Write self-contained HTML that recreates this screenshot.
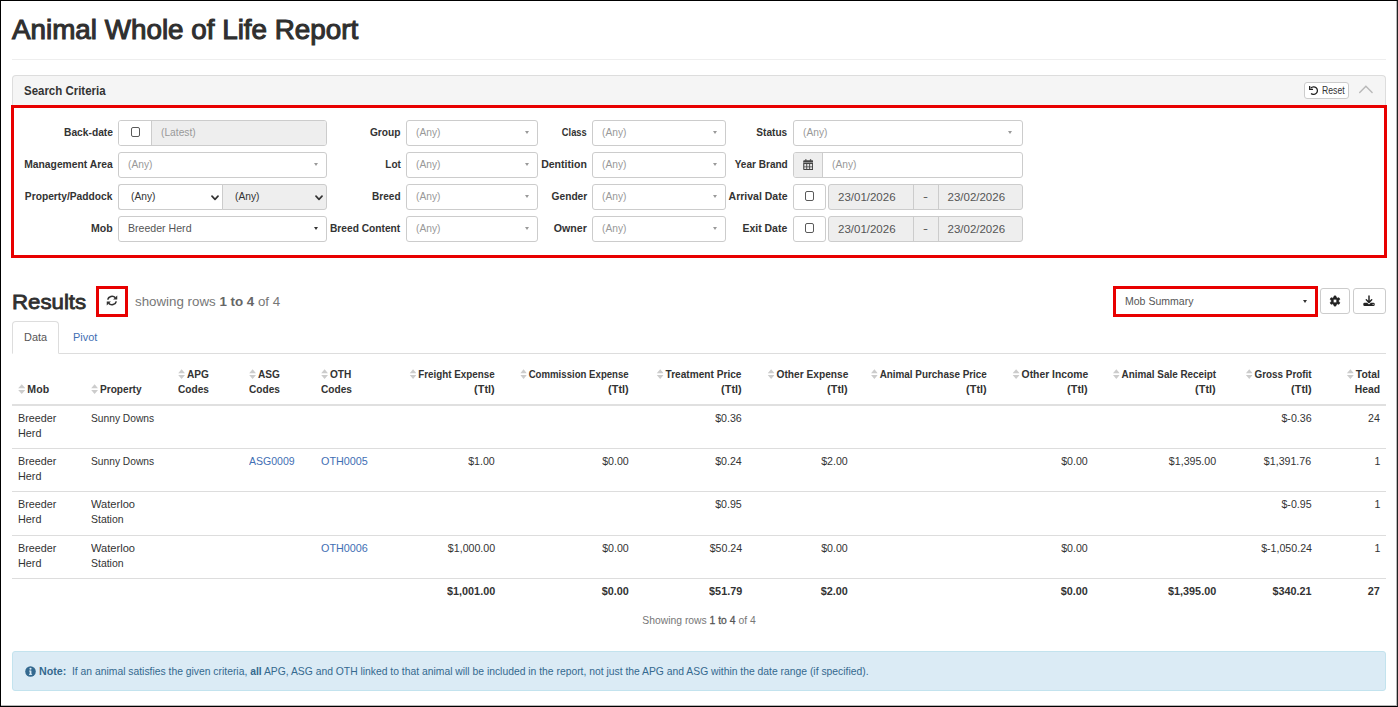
<!DOCTYPE html>
<html lang="en"><head><meta charset="utf-8"><title>Animal Whole of Life Report</title>
<style>
*{box-sizing:border-box}
html,body{margin:0;padding:0}
body{width:1398px;height:707px;position:relative;overflow:hidden;background:#fff;
 font-family:"Liberation Sans",sans-serif;font-size:11.5px;color:#333;line-height:1}
.frame{position:absolute;left:0;top:0;width:1398px;height:707px;border:1px solid #000;border-right-color:#222;box-shadow:inset -1px -1px 0 0 rgba(0,0,0,.28);z-index:50;pointer-events:none}
.abs{position:absolute}
.t{display:inline-block;white-space:nowrap;transform:scaleX(var(--sx,.89));transform-origin:0 50%}
.t.r{transform-origin:100% 50%}
.t.c{transform-origin:50% 50%}
.b{font-weight:bold}
h1{position:absolute;left:12px;top:17px;margin:0;font-size:27px;line-height:27px;font-weight:normal;-webkit-text-stroke:1.05px #2f2f2f;color:#2f2f2f;white-space:nowrap}
.hr{position:absolute;left:12px;top:59px;width:1374px;height:1px;background:#eee}
.panel-h{position:absolute;left:12px;top:75px;width:1374px;height:31px;background:#f5f5f5;border:1px solid #ddd;border-bottom:0;border-radius:4px 4px 0 0}
.panel-h .ttl{position:absolute;left:10.5px;top:8px;font-size:12px;line-height:14px;font-weight:bold;color:#333}
.redbox{position:absolute;border:3px solid #e80000;z-index:5}
.lbl{position:absolute;height:26px;line-height:24px;font-weight:bold;text-align:right;white-space:nowrap;color:#333}
.ctl{position:absolute;height:26px;border:1px solid #ccc;border-radius:3px;background:#fff;line-height:23px;white-space:nowrap;overflow:hidden}
.ctl .ph{position:absolute;left:8.7px;top:0;color:#999}
.ctl .val{position:absolute;left:8.7px;top:0;color:#555}
.caret{position:absolute;width:0;height:0;border-left:2.5px solid transparent;border-right:2.5px solid transparent;border-top:3px solid #888}
.dis{background:#eee}
.addon{position:absolute;top:0;height:24px;border-right:1px solid #ccc}
.cb{position:absolute;width:9.6px;height:9.8px;border:1.4px solid #5a5a5a;border-radius:2px;background:#fff}

table.g{position:absolute;left:12px;top:361px;width:1374px;border-collapse:collapse;table-layout:fixed;font-size:11.5px;line-height:15px}
table.g th,table.g td{padding:0 6px;vertical-align:top;text-align:left;font-weight:normal;overflow:visible}
table.g thead th{font-weight:bold;vertical-align:bottom;height:43.500px;padding-bottom:7px;border-bottom:2px solid #e0e0e0;color:#333}
table.g tbody td{padding-top:5.2px;border-bottom:1px solid #ddd;color:#333}
table.g tfoot td{height:28px;padding-top:4.7px;font-weight:bold;color:#333}
table.g .n{text-align:right}
table.g a{color:#3f6fb4;text-decoration:none}
.hc{display:flex;flex-direction:column;align-items:flex-start}
.hc.he{align-items:flex-end}
.si{display:inline-block;width:8.2px;height:10px;vertical-align:-1px;margin-right:2.000px}
</style></head>
<body>
<div class="frame"></div>
<h1><span class="t" style="--sx:1.030;">Animal Whole of Life Report</span></h1>
<div class="hr"></div>
<div class="panel-h"><span class="ttl"><span class="t" style="--sx:0.955;">Search Criteria</span></span></div>
<div class="redbox" style="left:11px;top:105px;width:1376px;height:153px"></div>
<div class="lbl" style="left:-27.5px;width:140px;top:120px"><span class="t r" style="--sx:0.891;">Back-date</span></div>
<div class="lbl" style="left:-27.5px;width:140px;top:152px"><span class="t r" style="--sx:0.896;">Management Area</span></div>
<div class="lbl" style="left:-27.5px;width:140px;top:184px"><span class="t r" style="--sx:0.890;">Property/Paddock</span></div>
<div class="lbl" style="left:-27.5px;width:140px;top:216px"><span class="t r" style="--sx:0.918;">Mob</span></div>
<div class="lbl" style="left:260.5px;width:140px;top:120px"><span class="t r" style="--sx:0.887;">Group</span></div>
<div class="lbl" style="left:260.5px;width:140px;top:152px"><span class="t r" style="--sx:0.872;">Lot</span></div>
<div class="lbl" style="left:260.5px;width:140px;top:184px"><span class="t r" style="--sx:0.874;">Breed</span></div>
<div class="lbl" style="left:260.5px;width:140px;top:216px"><span class="t r" style="--sx:0.887;">Breed Content</span></div>
<div class="lbl" style="left:447.0px;width:140px;top:120px"><span class="t r" style="--sx:0.811;">Class</span></div>
<div class="lbl" style="left:447.0px;width:140px;top:152px"><span class="t r" style="--sx:0.917;">Dentition</span></div>
<div class="lbl" style="left:447.0px;width:140px;top:184px"><span class="t r" style="--sx:0.887;">Gender</span></div>
<div class="lbl" style="left:447.0px;width:140px;top:216px"><span class="t r" style="--sx:0.922;">Owner</span></div>
<div class="lbl" style="left:647.5px;width:140px;top:120px"><span class="t r" style="--sx:0.876;">Status</span></div>
<div class="lbl" style="left:647.5px;width:140px;top:152px"><span class="t r" style="--sx:0.873;">Year Brand</span></div>
<div class="lbl" style="left:647.5px;width:140px;top:184px"><span class="t r" style="--sx:0.914;">Arrival Date</span></div>
<div class="lbl" style="left:647.5px;width:140px;top:216px"><span class="t r" style="--sx:0.910;">Exit Date</span></div>
<div class="ctl" style="left:118px;top:120px;width:209px"><span class="addon" style="left:0;width:33px;background:#fff"></span><span class="cb" style="left:11.5px;top:6.1px"></span><span class="abs dis" style="left:33px;top:0;width:175px;height:24px"></span><span class="ph" style="left:41.700px"><span class="t" style="--sx:0.890;">(Latest)</span></span></div>
<div class="ctl" style="left:118px;top:152px;width:209px"><span class="ph"><span class="t" style="--sx:0.890;">(Any)</span></span><span class="caret" style="right:8.5px;top:10.2px;border-top-color:#999"></span></div>
<div class="ctl" style="left:118px;top:216px;width:209px"><span class="val"><span class="t" style="--sx:0.920;">Breeder Herd</span></span><span class="caret" style="right:8.5px;top:10.2px;border-top-color:#333"></span></div>
<div class="ctl" style="left:406px;top:120px;width:132px"><span class="ph"><span class="t" style="--sx:0.890;">(Any)</span></span><span class="caret" style="right:8.5px;top:10.2px;border-top-color:#999"></span></div>
<div class="ctl" style="left:406px;top:152px;width:132px"><span class="ph"><span class="t" style="--sx:0.890;">(Any)</span></span><span class="caret" style="right:8.5px;top:10.2px;border-top-color:#999"></span></div>
<div class="ctl" style="left:406px;top:184px;width:132px"><span class="ph"><span class="t" style="--sx:0.890;">(Any)</span></span><span class="caret" style="right:8.5px;top:10.2px;border-top-color:#999"></span></div>
<div class="ctl" style="left:406px;top:216px;width:132px"><span class="ph"><span class="t" style="--sx:0.890;">(Any)</span></span><span class="caret" style="right:8.5px;top:10.2px;border-top-color:#999"></span></div>
<div class="ctl" style="left:592px;top:120px;width:134px"><span class="ph"><span class="t" style="--sx:0.890;">(Any)</span></span><span class="caret" style="right:8.5px;top:10.2px;border-top-color:#999"></span></div>
<div class="ctl" style="left:592px;top:152px;width:134px"><span class="ph"><span class="t" style="--sx:0.890;">(Any)</span></span><span class="caret" style="right:8.5px;top:10.2px;border-top-color:#999"></span></div>
<div class="ctl" style="left:592px;top:184px;width:134px"><span class="ph"><span class="t" style="--sx:0.890;">(Any)</span></span><span class="caret" style="right:8.5px;top:10.2px;border-top-color:#999"></span></div>
<div class="ctl" style="left:592px;top:216px;width:134px"><span class="ph"><span class="t" style="--sx:0.890;">(Any)</span></span><span class="caret" style="right:8.5px;top:10.2px;border-top-color:#999"></span></div>
<div class="ctl" style="left:793px;top:120px;width:230px"><span class="ph"><span class="t" style="--sx:0.890;">(Any)</span></span><span class="caret" style="right:10px;top:10.2px;border-top-color:#999"></span></div>
<div class="ctl" style="left:118px;top:184px;width:105px;border-radius:3px 0 0 3px;border-right:0"><span class="val" style="left:12px;color:#333"><span class="t" style="--sx:0.890;">(Any)</span></span><svg class="abs" style="right:4.5px;top:9.5px" width="8" height="6" viewBox="0 0 8 6"><path d="M1 1.2 L4 4.3 L7 1.2" fill="none" stroke="#333" stroke-width="1.7" stroke-linecap="round" stroke-linejoin="round"/></svg></div>
<div class="ctl dis" style="left:222px;top:184px;width:105px;border-radius:0 3px 3px 0"><span class="val" style="left:12px;color:#333"><span class="t" style="--sx:0.890;">(Any)</span></span><svg class="abs" style="right:3.5px;top:9.5px" width="8" height="6" viewBox="0 0 8 6"><path d="M1 1.2 L4 4.3 L7 1.2" fill="none" stroke="#333" stroke-width="1.7" stroke-linecap="round" stroke-linejoin="round"/></svg></div>
<div class="ctl" style="left:793px;top:152px;width:230px"><span class="addon dis" style="left:0;width:28.5px"></span><svg class="abs" style="left:9.000px;top:5.800px" width="10.4" height="11.2" viewBox="0 0 10.4 11.2"><path d="M2.2 0.2h1.300v1.600H2.200zM6.900 0.200h1.300v1.600H6.900z" fill="#444"/><path d="M0.200 2.200a1 1 0 0 1 1-1h8.000a1 1 0 0 1 1 1v7.900a1 1 0 0 1-1 1H1.200a1 1 0 0 1-1-1z" fill="#444"/><path d="M0.200 3.300h10v0.600h-10z" fill="#aaa"/><path d="M1.300 5.100h2.000v2.300H1.300zM4.200 5.100h2.000v2.300H4.200zM7.100 5.100h2.000v2.300H7.100zM1.300 8.200h2.000v1.900H1.300zM4.200 8.200h2.000v1.900H4.200zM7.100 8.200h2.000v1.900H7.100z" fill="#e4e4e4"/></svg><span class="ph" style="left:38px"><span class="t" style="--sx:0.890;">(Any)</span></span></div>
<div class="ctl" style="left:793px;top:184px;width:33px"><span class="cb" style="left:10.800px;top:6.400px"></span></div><div class="ctl dis" style="left:828px;top:184px;width:195px"><span class="val" style="left:9px;top:0.5px"><span class="t" style="--sx:1.000;">23/01/2026</span></span><span class="abs" style="left:84.200px;top:0;width:25.500px;height:24px;border-left:1px solid #ccc;border-right:1px solid #ccc"></span><span class="val" style="left:94px;top:-0.5px"><span class="t" style="--sx:1.300;">-</span></span><span class="val" style="left:118.500px;top:0.5px"><span class="t" style="--sx:1.000;">23/02/2026</span></span></div>
<div class="ctl" style="left:793px;top:216px;width:33px"><span class="cb" style="left:10.800px;top:6.400px"></span></div><div class="ctl dis" style="left:828px;top:216px;width:195px"><span class="val" style="left:9px;top:0.5px"><span class="t" style="--sx:1.000;">23/01/2026</span></span><span class="abs" style="left:84.200px;top:0;width:25.500px;height:24px;border-left:1px solid #ccc;border-right:1px solid #ccc"></span><span class="val" style="left:94px;top:-0.5px"><span class="t" style="--sx:1.300;">-</span></span><span class="val" style="left:118.500px;top:0.5px"><span class="t" style="--sx:1.000;">23/02/2026</span></span></div>
<div class="abs" style="left:1304px;top:82px;width:44.5px;height:16.5px;border:1px solid #ccc;border-radius:3px;background:#fff;z-index:6"><svg class="abs" style="left:4.1px;top:2.6px" width="9.2" height="9.2" viewBox="0 0 512 512"><path d="M0 0H72V152H224V224H0Z" fill="#222"/><path d="M98.5 114.1A212 212 0 1 1 114.1 413.5" fill="none" stroke="#222" stroke-width="70"/></svg><span class="abs" style="left:16.800px;top:2.600px;font-size:10px;line-height:10px;color:#333"><span class="t" style="--sx:0.865;">Reset</span></span></div>
<svg class="abs" style="left:1357.500px;top:84px;z-index:6" width="16" height="11" viewBox="0 0 16 11"><path d="M1.700 8.600 L7.900 2.300 L14.100 8.600" fill="none" stroke="#b8b8b8" stroke-width="1.4" stroke-linecap="round" stroke-linejoin="miter"/></svg>
<div class="abs" style="left:11.800px;top:292px;font-size:20.5px;line-height:20.5px;color:#2f2f2f;-webkit-text-stroke:0.8px #2f2f2f"><span class="t" style="--sx:1.085;">Results</span></div>
<div class="redbox" style="left:96px;top:286px;width:32px;height:31px"></div>
<svg class="abs" style="left:105.800px;top:295px" width="12" height="11" preserveAspectRatio="none" viewBox="0 0 11 11"><path d="M1.6 4.600 A4.000 4.000 0 0 1 8.600 2.700" fill="none" stroke="#333" stroke-width="1.500"/><path d="M9.400 6.400 A4.000 4.000 0 0 1 2.400 8.300" fill="none" stroke="#333" stroke-width="1.5"/><path d="M10.300 0.600 L10.300 4.400 L6.500 4.400 Z" fill="#333"/><path d="M0.700 10.400 L0.700 6.600 L4.500 6.600 Z" fill="#333"/></svg>
<div class="abs" style="left:135.000px;top:295.000px;font-size:13px;line-height:13px;color:#777"><span class="t" style="--sx:1.025;">showing rows <b style="color:#666">1 to 4</b> of 4</span></div>
<div class="redbox" style="left:1113px;top:286px;width:205px;height:31px"></div>
<div class="abs" style="left:1116px;top:289px;width:199px;height:25px;background:#fff"><span class="abs" style="left:9.000px;top:6.500px;color:#555"><span class="t" style="--sx:0.915;">Mob Summary</span></span><span class="caret" style="right:8px;top:10.5px;border-top-color:#333"></span></div>
<div class="abs" style="left:1320px;top:288px;width:30px;height:26px;border:1px solid #ccc;border-radius:3px;background:#fff"><svg class="abs" style="left:7.800px;top:5.600px" width="12" height="12" viewBox="0 0 12 12"><path fill="#222" fill-rule="evenodd" stroke="#222" stroke-width="0.7" stroke-linejoin="round" d="M4.89 2.31 L5.09 0.93 L6.91 0.93 L7.11 2.31 L8.64 3.19 L9.93 2.68 L10.85 4.26 L9.75 5.12 L9.75 6.88 L10.85 7.74 L9.93 9.32 L8.64 8.81 L7.11 9.69 L6.91 11.07 L5.09 11.07 L4.89 9.69 L3.36 8.81 L2.07 9.32 L1.15 7.74 L2.25 6.88 L2.25 5.12 L1.15 4.26 L2.07 2.68 L3.36 3.19Z M4.10 6.00 a1.9 1.9 0 1 0 3.8 0 a1.9 1.9 0 1 0 -3.8 0Z"/></svg></div>
<div class="abs" style="left:1353px;top:288px;width:33px;height:26px;border:1px solid #ccc;border-radius:3px;background:#fff"><svg class="abs" style="left:9.300px;top:5.700px" width="12" height="12" viewBox="0 0 12 12"><path d="M1.6 7.8h8.800a1.300 1.300 0 0 1 1.300 1.300v0.600a1.300 1.300 0 0 1-1.300 1.300H1.600a1.300 1.300 0 0 1-1.300-1.300v-0.600a1.300 1.300 0 0 1 1.300-1.300z" fill="#222"/><path d="M3.900 7.600 L6 9.600 L8.100 7.600Z" fill="#fff"/><circle cx="10.100" cy="9.400" r="0.550" fill="#ddd"/><path d="M6 0.900V7.400M3.300 4.800L6 7.500L8.700 4.800" fill="none" stroke="#222" stroke-width="1.450" stroke-linecap="round" stroke-linejoin="round"/></svg></div>
<div class="abs" style="left:12px;top:352.500px;width:1374px;height:1px;background:#ddd"></div>
<div class="abs" style="left:12px;top:321px;width:47px;height:33px;border:1px solid #ddd;border-bottom:1px solid #fff;border-radius:4px 4px 0 0;background:#fff"><span class="abs" style="left:10.5px;top:9.500px;color:#555"><span class="t" style="--sx:0.950;">Data</span></span></div>
<div class="abs" style="left:73.000px;top:331.500px;color:#3f6fb4"><span class="t" style="--sx:0.950;">Pivot</span></div>
<table class="g"><colgroup><col style="width:73px"><col style="width:87.3px"><col style="width:70.6px"><col style="width:72.1px"><col style="width:88.5px"><col style="width:97.2px"><col style="width:134.2px"><col style="width:112.7px"><col style="width:106.3px"><col style="width:138.5px"><col style="width:101.2px"><col style="width:127.9px"><col style="width:95.7px"><col style="width:68.3px"></colgroup><thead><tr><th class=""><div class="hc "><span class="t" style="--sx:0.920;"><svg class="si" viewBox="0 0 8.2 10"><path d="M0.200 4.300 L4.1 0.300 L8.000 4.300Z M0.200 5.900 L4.1 9.900 L8.000 5.900Z" fill="#ccc"/></svg>Mob</span></div></th><th class=""><div class="hc "><span class="t" style="--sx:0.880;"><svg class="si" viewBox="0 0 8.2 10"><path d="M0.200 4.300 L4.1 0.300 L8.000 4.300Z M0.200 5.900 L4.1 9.900 L8.000 5.900Z" fill="#ccc"/></svg>Property</span></div></th><th class=""><div class="hc "><span class="t" style="--sx:0.880;"><svg class="si" viewBox="0 0 8.2 10"><path d="M0.200 4.300 L4.1 0.300 L8.000 4.300Z M0.200 5.900 L4.1 9.900 L8.000 5.900Z" fill="#ccc"/></svg>APG</span><span class="t" style="--sx:0.880;">Codes</span></div></th><th class=""><div class="hc "><span class="t" style="--sx:0.880;"><svg class="si" viewBox="0 0 8.2 10"><path d="M0.200 4.300 L4.1 0.300 L8.000 4.300Z M0.200 5.900 L4.1 9.900 L8.000 5.900Z" fill="#ccc"/></svg>ASG</span><span class="t" style="--sx:0.880;">Codes</span></div></th><th class=""><div class="hc "><span class="t" style="--sx:0.880;"><svg class="si" viewBox="0 0 8.2 10"><path d="M0.200 4.300 L4.1 0.300 L8.000 4.300Z M0.200 5.900 L4.1 9.900 L8.000 5.900Z" fill="#ccc"/></svg>OTH</span><span class="t" style="--sx:0.880;">Codes</span></div></th><th class="n"><div class="hc he"><span class="t r" style="--sx:0.854;"><svg class="si" viewBox="0 0 8.2 10"><path d="M0.200 4.300 L4.1 0.300 L8.000 4.300Z M0.200 5.900 L4.1 9.900 L8.000 5.900Z" fill="#ccc"/></svg>Freight Expense</span><span class="t r" style="--sx:0.950;">(Ttl)</span></div></th><th class="n"><div class="hc he"><span class="t r" style="--sx:0.837;"><svg class="si" viewBox="0 0 8.2 10"><path d="M0.200 4.300 L4.1 0.300 L8.000 4.300Z M0.200 5.900 L4.1 9.900 L8.000 5.900Z" fill="#ccc"/></svg>Commission Expense</span><span class="t r" style="--sx:0.950;">(Ttl)</span></div></th><th class="n"><div class="hc he"><span class="t r" style="--sx:0.880;"><svg class="si" viewBox="0 0 8.2 10"><path d="M0.200 4.300 L4.1 0.300 L8.000 4.300Z M0.200 5.900 L4.1 9.900 L8.000 5.900Z" fill="#ccc"/></svg>Treatment Price</span><span class="t r" style="--sx:0.950;">(Ttl)</span></div></th><th class="n"><div class="hc he"><span class="t r" style="--sx:0.885;"><svg class="si" viewBox="0 0 8.2 10"><path d="M0.200 4.300 L4.1 0.300 L8.000 4.300Z M0.200 5.900 L4.1 9.900 L8.000 5.900Z" fill="#ccc"/></svg>Other Expense</span><span class="t r" style="--sx:0.950;">(Ttl)</span></div></th><th class="n"><div class="hc he"><span class="t r" style="--sx:0.860;"><svg class="si" viewBox="0 0 8.2 10"><path d="M0.200 4.300 L4.1 0.300 L8.000 4.300Z M0.200 5.900 L4.1 9.900 L8.000 5.900Z" fill="#ccc"/></svg>Animal Purchase Price</span><span class="t r" style="--sx:0.950;">(Ttl)</span></div></th><th class="n"><div class="hc he"><span class="t r" style="--sx:0.900;"><svg class="si" viewBox="0 0 8.2 10"><path d="M0.200 4.300 L4.1 0.300 L8.000 4.300Z M0.200 5.900 L4.1 9.900 L8.000 5.900Z" fill="#ccc"/></svg>Other Income</span><span class="t r" style="--sx:0.950;">(Ttl)</span></div></th><th class="n"><div class="hc he"><span class="t r" style="--sx:0.860;"><svg class="si" viewBox="0 0 8.2 10"><path d="M0.200 4.300 L4.1 0.300 L8.000 4.300Z M0.200 5.900 L4.1 9.900 L8.000 5.900Z" fill="#ccc"/></svg>Animal Sale Receipt</span><span class="t r" style="--sx:0.950;">(Ttl)</span></div></th><th class="n"><div class="hc he"><span class="t r" style="--sx:0.860;"><svg class="si" viewBox="0 0 8.2 10"><path d="M0.200 4.300 L4.1 0.300 L8.000 4.300Z M0.200 5.900 L4.1 9.900 L8.000 5.900Z" fill="#ccc"/></svg>Gross Profit</span><span class="t r" style="--sx:0.950;">(Ttl)</span></div></th><th class="n"><div class="hc he"><span class="t r" style="--sx:0.900;"><svg class="si" viewBox="0 0 8.2 10"><path d="M0.200 4.300 L4.1 0.300 L8.000 4.300Z M0.200 5.900 L4.1 9.900 L8.000 5.900Z" fill="#ccc"/></svg>Total</span><span class="t r" style="--sx:0.900;">Head</span></div></th></tr></thead><tbody><tr style="height:44px"><td class=""><span class="t" style="--sx:0.935;">Breeder</span><br><span class="t" style="--sx:0.940;">Herd</span></td><td class=""><span class="t" style="--sx:0.890;">Sunny Downs</span></td><td></td><td></td><td></td><td></td><td></td><td class="n"><span class="t r" style="--sx:0.925;">$0.36</span></td><td></td><td></td><td></td><td></td><td class="n"><span class="t r" style="--sx:0.925;">$-0.36</span></td><td class="n"><span class="t r" style="--sx:0.925;">24</span></td></tr><tr style="height:43px"><td class=""><span class="t" style="--sx:0.935;">Breeder</span><br><span class="t" style="--sx:0.940;">Herd</span></td><td class=""><span class="t" style="--sx:0.890;">Sunny Downs</span></td><td></td><td class=""><span class="t" style="--sx:0.915;"><a>ASG0009</a></span></td><td class=""><span class="t" style="--sx:0.940;"><a>OTH0005</a></span></td><td class="n"><span class="t r" style="--sx:0.925;">$1.00</span></td><td class="n"><span class="t r" style="--sx:0.925;">$0.00</span></td><td class="n"><span class="t r" style="--sx:0.925;">$0.24</span></td><td class="n"><span class="t r" style="--sx:0.925;">$2.00</span></td><td></td><td class="n"><span class="t r" style="--sx:0.925;">$0.00</span></td><td class="n"><span class="t r" style="--sx:0.925;">$1,395.00</span></td><td class="n"><span class="t r" style="--sx:0.925;">$1,391.76</span></td><td class="n"><span class="t r" style="--sx:0.925;">1</span></td></tr><tr style="height:44px"><td class=""><span class="t" style="--sx:0.935;">Breeder</span><br><span class="t" style="--sx:0.940;">Herd</span></td><td class=""><span class="t" style="--sx:0.965;">Waterloo</span><br><span class="t" style="--sx:0.910;">Station</span></td><td></td><td></td><td></td><td></td><td></td><td class="n"><span class="t r" style="--sx:0.925;">$0.95</span></td><td></td><td></td><td></td><td></td><td class="n"><span class="t r" style="--sx:0.925;">$-0.95</span></td><td class="n"><span class="t r" style="--sx:0.925;">1</span></td></tr><tr style="height:43px"><td class=""><span class="t" style="--sx:0.935;">Breeder</span><br><span class="t" style="--sx:0.940;">Herd</span></td><td class=""><span class="t" style="--sx:0.965;">Waterloo</span><br><span class="t" style="--sx:0.910;">Station</span></td><td></td><td></td><td class=""><span class="t" style="--sx:0.940;"><a>OTH0006</a></span></td><td class="n"><span class="t r" style="--sx:0.925;">$1,000.00</span></td><td class="n"><span class="t r" style="--sx:0.925;">$0.00</span></td><td class="n"><span class="t r" style="--sx:0.925;">$50.24</span></td><td class="n"><span class="t r" style="--sx:0.925;">$0.00</span></td><td></td><td class="n"><span class="t r" style="--sx:0.925;">$0.00</span></td><td></td><td class="n"><span class="t r" style="--sx:0.925;">$-1,050.24</span></td><td class="n"><span class="t r" style="--sx:0.925;">1</span></td></tr></tbody><tfoot><tr><td></td><td></td><td></td><td></td><td></td><td class="n"><span class="t r" style="--sx:0.940;">$1,001.00</span></td><td class="n"><span class="t r" style="--sx:0.940;">$0.00</span></td><td class="n"><span class="t r" style="--sx:0.940;">$51.79</span></td><td class="n"><span class="t r" style="--sx:0.940;">$2.00</span></td><td></td><td class="n"><span class="t r" style="--sx:0.940;">$0.00</span></td><td class="n"><span class="t r" style="--sx:0.940;">$1,395.00</span></td><td class="n"><span class="t r" style="--sx:0.940;">$340.21</span></td><td class="n"><span class="t r" style="--sx:0.940;">27</span></td></tr></tfoot></table>
<div class="abs" style="left:12px;top:614.500px;width:1374px;text-align:center;color:#777"><span class="t c" style="--sx:0.900;">Showing rows <b style="font-weight:normal;color:#555;-webkit-text-stroke:0.3px #555">1 to 4</b> of 4</span></div>
<div class="abs" style="left:12px;top:651px;width:1374px;height:40px;background:#dbebf5;border:1px solid #c3e3ee;border-radius:3px;color:#34698f"><svg class="abs" style="left:11.700px;top:14.000px" width="11" height="11" viewBox="0 0 11 11"><circle cx="5.5" cy="5.5" r="5.3" fill="#34698f"/><rect x="4.700" y="4.600" width="1.700" height="4.000" fill="#dbebf5"/><rect x="4.200" y="4.600" width="1.400" height="0.900" fill="#dbebf5"/><rect x="4.000" y="7.900" width="3.100" height="0.900" fill="#dbebf5"/><circle cx="5.500" cy="2.800" r="1.050" fill="#dbebf5"/></svg><span class="abs b" style="left:27.500px;top:13.500px;margin-left:-1.1px"><span class="t" style="--sx:0.930;">Note:</span></span><span class="abs" style="left:59.000px;top:13.500px"><span class="t" style="--sx:0.899;">If an animal satisfies the given criteria, <b>all</b> APG, ASG and OTH linked to that animal will be included in the report, not just the APG and ASG within the date range (if specified).</span></span></div>
</body></html>
